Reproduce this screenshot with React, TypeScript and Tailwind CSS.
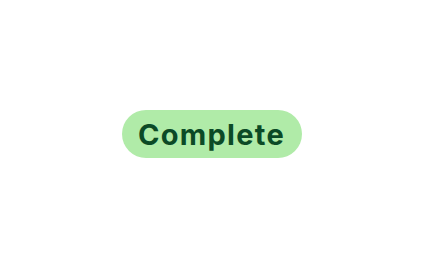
export default function App() {
	return (
		<div className="flex h-[268px] w-[423px] items-center justify-center bg-white">
			<span className="flex h-[48px] w-[180px] items-center justify-center rounded-full bg-[#b0eba8] pt-[2px] font-['Inter',sans-serif] text-[29px] font-bold tracking-[1.3px] text-[#0b4a26]">
				Complete
			</span>
		</div>
	)
}
